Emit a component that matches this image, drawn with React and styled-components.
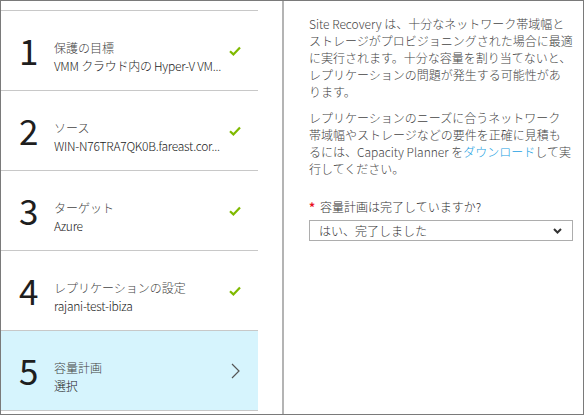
import React from 'react'
import styled, { createGlobalStyle } from 'styled-components'

const steps = [
  { num: 1, title: '保護の目標', sub: 'VMM クラウド内の Hyper-V VM...', done: true },
  { num: 2, title: 'ソース', sub: 'WIN-N76TRA7QK0B.fareast.cor...', done: true },
  { num: 3, title: 'ターゲット', sub: 'Azure', done: true },
  { num: 4, title: 'レプリケーションの設定', sub: 'rajani-test-ibiza', done: true },
  { num: 5, title: '容量計画', sub: '選択', done: false, active: true },
]

function Check() {
  return (
    <svg width="12" height="10" viewBox="0 0 12 10">
      <path d="M1 5.2 L4.4 8.4 L11 1.4" fill="none" stroke="#7fba00" strokeWidth="2.2" />
    </svg>
  )
}

function Chevron() {
  return (
    <svg width="9" height="16" viewBox="0 0 9 16">
      <path d="M1 1 L8 8 L1 15" fill="none" stroke="#555" strokeWidth="1.2" />
    </svg>
  )
}

function ChevronDown() {
  return (
    <svg width="9" height="6" viewBox="0 0 9 6">
      <path d="M1 1 L4.5 4.5 L8 1" fill="none" stroke="#333" strokeWidth="2" />
    </svg>
  )
}

function App() {
  return (
    <>
      <GlobalStyle />
      <Frame>
        <StepList>
          {steps.map((s) => (
            <Step key={s.num} $active={s.active}>
              <Num>{s.num}</Num>
              <StepText>
                <StepTitle>{s.title}</StepTitle>
                <StepSub>{s.sub}</StepSub>
              </StepText>
              <StepIcon>{s.done ? <Check /> : <Chevron />}</StepIcon>
            </Step>
          ))}
        </StepList>
        <Separator />
        <Detail>
          <Para>
            Site Recovery は、十分なネットワーク帯域幅と<br />
            ストレージがプロビジョニングされた場合に最適<br />
            に実行されます。十分な容量を割り当てないと、<br />
            レプリケーションの問題が発生する可能性があ<br />
            ります。
          </Para>
          <Para>
            レプリケーションのニーズに合うネットワーク<br />
            帯域幅やストレージなどの要件を正確に見積も<br />
            るには、Capacity Planner を<Link>ダウンロード</Link>して実<br />
            行してください。
          </Para>
          <Label>
            <Required>*</Required>容量計画は完了していますか?
          </Label>
          <Select>
            <span>はい、完了しました</span>
            <ChevronDown />
          </Select>
        </Detail>
      </Frame>
    </>
  )
}

export default App

//#region Styling
const GlobalStyle = createGlobalStyle`
  html, body { margin: 0; padding: 0; background: #fff; }
  body { font-family: "Noto Sans CJK JP", "Noto Sans", sans-serif; font-weight: 300; }
`
const Frame = styled.div`
  display: flex;
  width: 584px;
  height: 415px;
  box-sizing: border-box;
  border: 1px solid #7a7a7a;
  background: #fff;
  overflow: hidden;
`
const StepList = styled.div`
  display: flex;
  flex-direction: column;
  width: 281px;
  padding-top: 9px;
  box-sizing: border-box;
`
const Step = styled.div`
  display: flex;
  align-items: center;
  width: 258px;
  height: 80px;
  box-sizing: border-box;
  border-top: 1px solid #c8c8c8;
  padding: 0 16px 0 19px;
  margin-left: -1px;
  background: ${(p) => (p.$active ? '#d6f4fd' : 'transparent')};
  &:last-child { border-bottom: 1px solid #c8c8c8; height: 81px; }
`
const Num = styled.div`
  width: 35px;
  flex-shrink: 0;
  font-size: 35px;
  font-weight: 400;
  line-height: 40px;
  color: #1e1e1e;
  margin-top: -2px;
`
const StepText = styled.div`
  flex: 1;
  min-width: 0;
  margin-top: 12px;
  display: flex;
  flex-direction: column;
`
const StepTitle = styled.div`
  font-size: 12px;
  line-height: 18px;
  color: #444;
  white-space: nowrap;
`
const StepSub = styled.div`
  font-size: 12px;
  line-height: 18px;
  color: #222;
  white-space: nowrap;
  letter-spacing: -0.25px;
`
const StepIcon = styled.div`
  width: 14px;
  flex-shrink: 0;
  display: flex;
  justify-content: center;
  align-items: center;
`
const Separator = styled.div`
  width: 2px;
  flex-shrink: 0;
  background: #b4b4b4;
`
const Detail = styled.div`
  flex: 1;
  padding: 14px 0 0 25px;
  color: #444;
  font-size: 12px;
`
const Para = styled.p`
  margin: 0 0 9px;
  line-height: 17px;
  white-space: nowrap;
`
const Link = styled.span`
  color: #1ba1e2;
`
const Label = styled.div`
  margin-top: 21px;
  line-height: 17px;
  color: #333;
`
const Required = styled.span`
  color: #e81123;
  font-weight: bold;
  margin-right: 5px;
`
const Select = styled.div`
  display: flex;
  align-items: center;
  justify-content: space-between;
  width: 264px;
  height: 21px;
  margin-top: 5px;
  box-sizing: border-box;
  border: 1px solid #adadad;
  padding: 0 10px 0 9px;
  color: #333;
  line-height: 19px;
`
//#endregion
